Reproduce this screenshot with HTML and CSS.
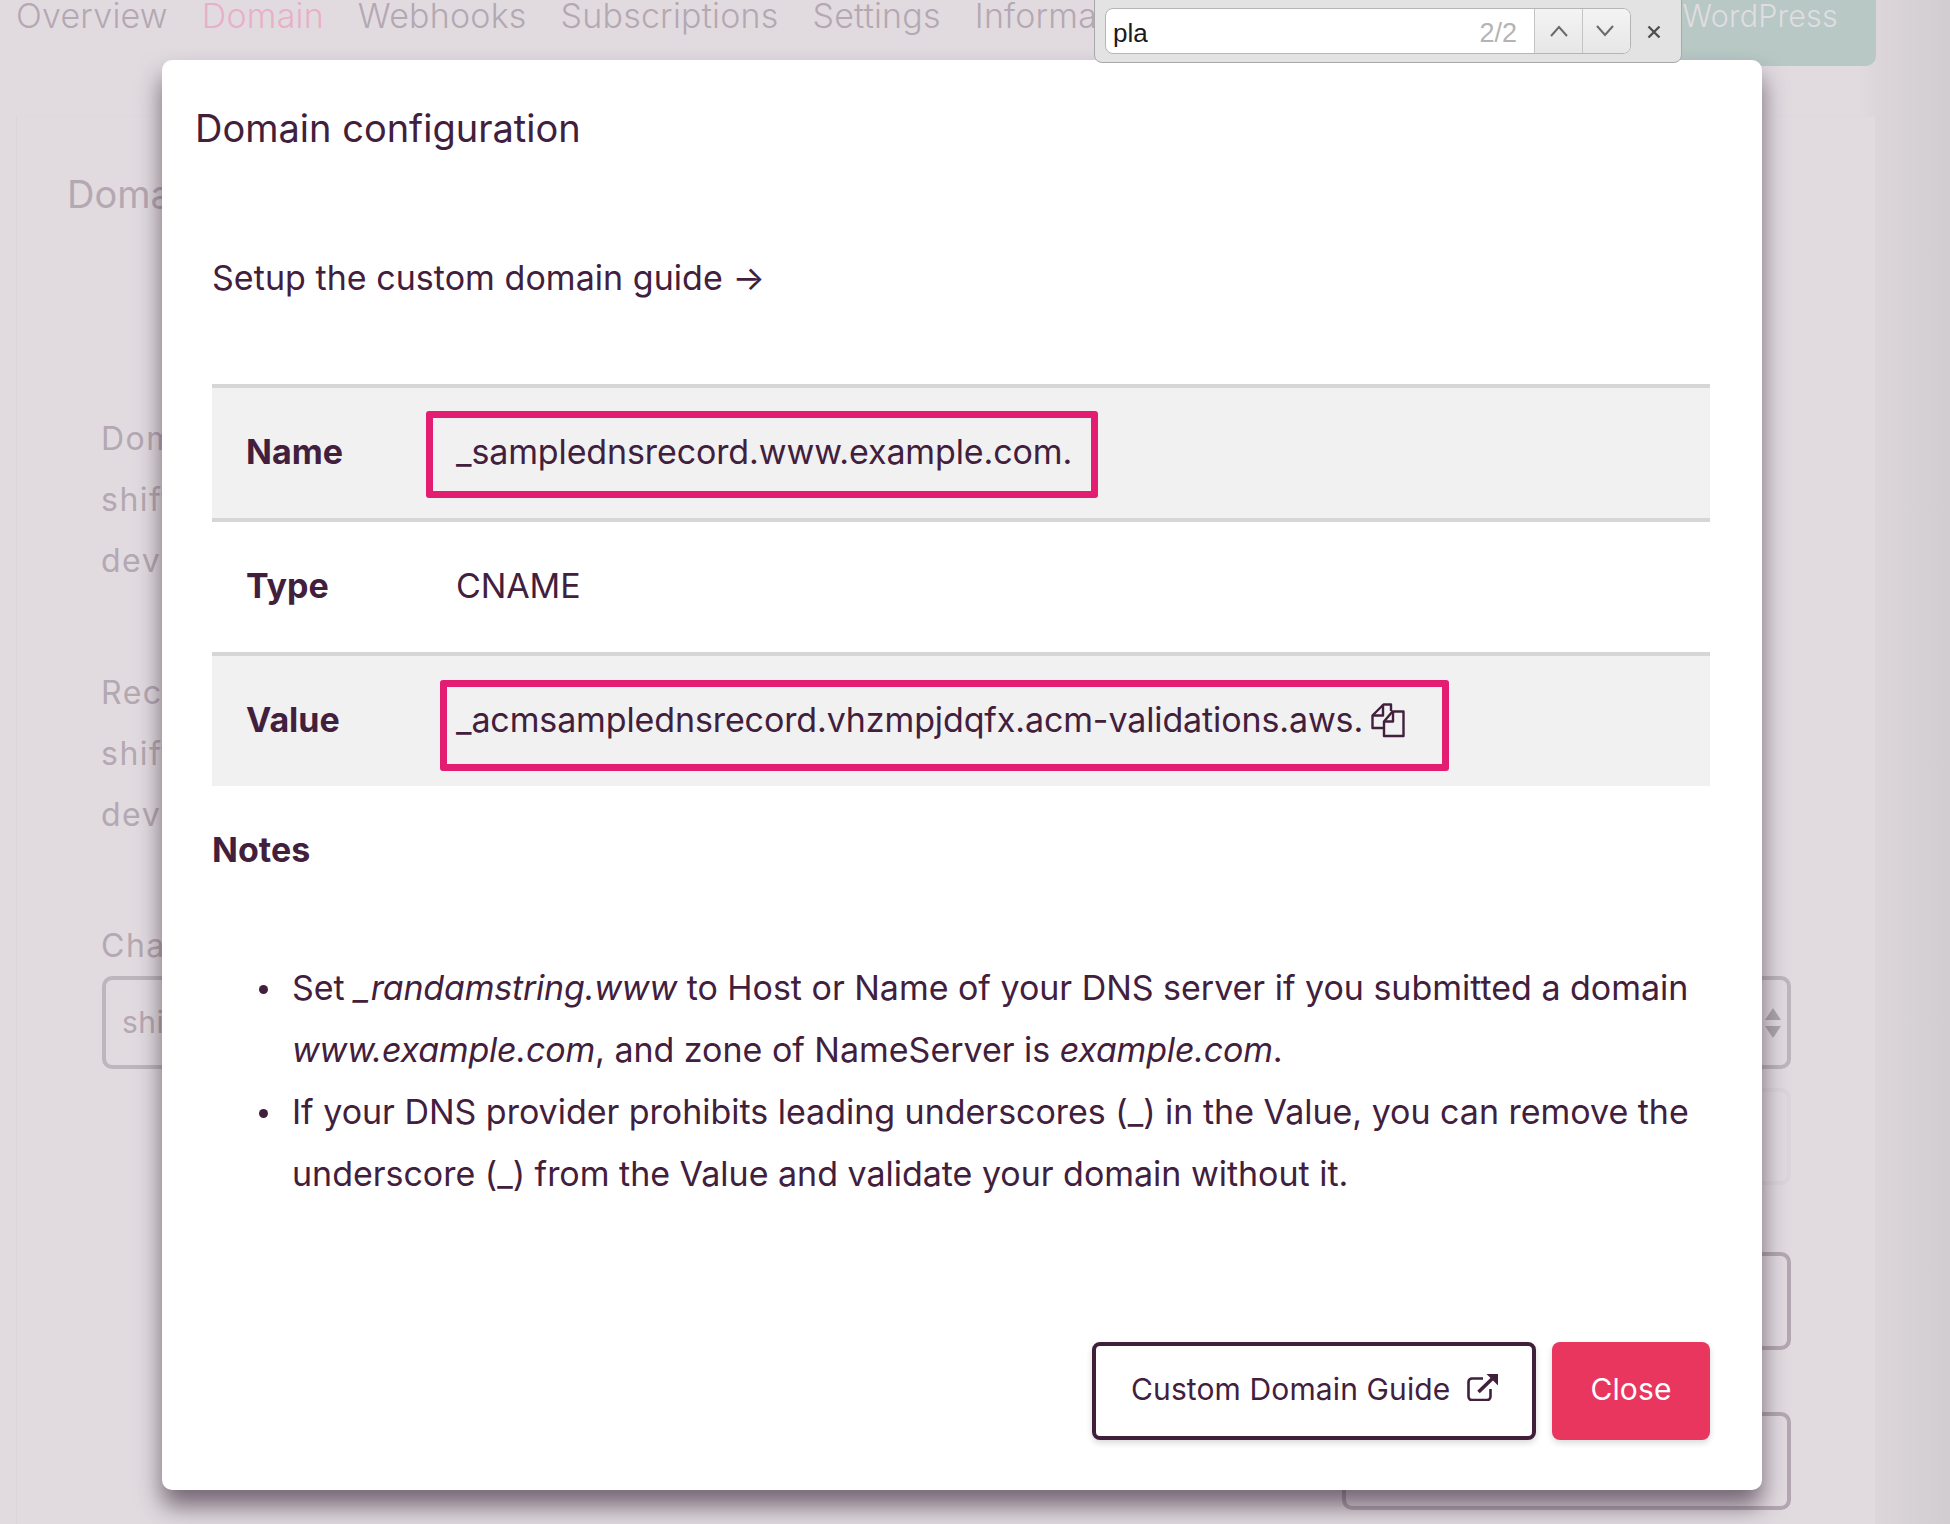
FILE: index.html
```html
<!DOCTYPE html>
<html lang="en">
<head>
<meta charset="utf-8">
<title>Domain configuration</title>
<link rel="stylesheet" href="styles.css">
</head>
<body>
<header class="nav">
  <a class="tab">Overview</a>
  <a class="tab tab-active">Domain</a>
  <a class="tab">Webhooks</a>
  <a class="tab">Subscriptions</a>
  <a class="tab">Settings</a>
  <a class="tab">Information</a>
  <span class="wp-button">WordPress</span>
</header>
<main class="card">
  <h2 class="card-title">Domain</h2>
  <div class="info-block">Domain<br>shiftdemo<br>dev</div>
  <div class="info-block">Record<br>shiftdemo<br>dev</div>
  <div class="field-label">Change</div>
  <div class="select-box">shiftdemo
    <svg class="select-arrows" width="16" height="30" viewBox="0 0 16 30"><path d="M8 0l8 12H0zM0 18h16L8 30z"/></svg>
  </div>
  <div class="faint-box"></div>
  <div class="plain-box plain-box-a"></div>
  <div class="plain-box plain-box-b"></div>
</main>

<section class="modal">
  <h1 class="modal-title">Domain configuration</h1>
  <div class="modal-body">
    <a class="guide-link">Setup the custom domain guide →</a>
    <div class="record-table">
      <div class="record-row record-shaded">
        <span class="record-key">Name</span>
        <span>_samplednsrecord.www.example.com.</span>
        <i class="mark mark-name"></i>
      </div>
      <div class="record-row">
        <span class="record-key">Type</span>
        <span>CNAME</span>
      </div>
      <div class="record-row record-shaded">
        <span class="record-key">Value</span>
        <span>_acmsamplednsrecord.vhzmpjdqfx.acm-validations.aws.</span>
        <svg class="copy-icon" width="34" height="35" viewBox="0 0 34 35" fill="none" stroke="#42203d" stroke-width="2.4" stroke-linejoin="round">
          <path d="M12.5 25H1.5V12.5L12.5 1.5h7.5V8"/>
          <path d="M12 1.5V12.5H1.5"/>
          <path d="M13 18.5L21.5 8.5H32.5V33H13z"/>
          <path d="M22 8.5V18.5H13"/>
        </svg>
        <i class="mark mark-value"></i>
      </div>
    </div>
    <h3 class="notes-title">Notes</h3>
    <ul class="notes">
      <li>Set <em>_randamstring.www</em> to Host or Name of your DNS server if you submitted a domain <em>www.example.com</em>, and zone of NameServer is <em>example.com</em>.</li>
      <li>If your DNS provider prohibits leading underscores (_) in the Value, you can remove the underscore (_) from the Value and validate your domain without it.</li>
    </ul>
  </div>
  <footer class="modal-footer">
    <button class="btn btn-outline"><span class="btn-label">Custom Domain Guide</span>
      <svg class="ext-icon" width="31" height="27" viewBox="0 0 31 27" fill="none" stroke="#42203d" stroke-width="2.6">
        <path d="M16 4.5H5a3.5 3.5 0 0 0-3.500 3.500v14.500a3.500 3.500 0 0 0 3.500 3.500h15a3.500 3.500 0 0 0 3.500-3.500V15"/>
        <path d="M11.500 18L27 3" stroke-width="3.600"/>
        <path d="M19.500 0H31v11.500z" fill="#42203d" stroke="none"/>
      </svg>
    </button>
    <button class="btn btn-primary"><span class="btn-label">Close</span></button>
  </footer>
</section>

<div class="findbar">
  <div class="find-input">
    <span class="find-query">pla</span>
    <span class="find-count">2/2</span>
    <span class="find-btn">
      <svg width="20" height="12" viewBox="0 0 20 12" fill="none" stroke="#6a6a6a" stroke-width="2"><path d="M2 11l8-9 8 9"/></svg>
    </span>
    <span class="find-btn">
      <svg class="find-down" width="20" height="12" viewBox="0 0 20 12" fill="none" stroke="#6a6a6a" stroke-width="2"><path d="M2 1l8 9 8-9"/></svg>
    </span>
  </div>
  <svg class="find-close" width="14" height="14" viewBox="0 0 14 14" fill="none" stroke="#4f4f4f" stroke-width="2.400"><path d="M1.500 1.500l11 11M12.500 1.500l-11 11"/></svg>
</div>
</body>
</html>
```
FILE: styles.css
```css
* { box-sizing: border-box; }

html, body { margin: 0; height: 1524px; overflow: hidden; }

body {
  position: relative;
  font-family: Inter, "Noto Sans", sans-serif;
  font-size: 34px;
  color: #42203d;
  background: linear-gradient(90deg, #e1dbe0 0, #e1dbe0 1860px, #dcd6da 1876px, #d2cdd1 1950px);
}

.nav {
  display: flex;
  align-items: flex-start;
  height: 66px;
  width: 1876px;
  padding-left: 16px;
  margin-bottom: 50px;
  color: #b4a8b2;
  font-weight: 300;
  letter-spacing: 0.2px;
}

.tab { line-height: 31px; margin-right: 34px; }
.tab-active { color: #e8b0c6; }

.wp-button {
  position: absolute;
  left: 1636px;
  top: 0;
  width: 240px;
  height: 66px;
  padding: 0 38px 0 0;
  border-radius: 0 0 10px 10px;
  background: #b7c8c5;
  color: #e0dde0;
  font-size: 30.5px;
  line-height: 32px;
  text-align: right;
}

.card {
  width: 1860px;
  height: 1408px;
  margin-left: 16px;
  padding: 55px 84px 0 84px;
  background: #e1dbe0;
  color: #b4a8b2;
  border-left: 1px solid #dcd6da;
  border-top: 1px solid #dfd9de;
  border-right: 1px solid #dcd6da;
  font-size: 32px;
  letter-spacing: 1.5px;
  font-weight: 400;
}

.card-title {
  margin: 0 0 192px -34px;
  font-size: 38px;
  font-weight: 400;
  line-height: 44px;
  letter-spacing: 0;
}

.info-block { line-height: 61px; margin-bottom: 71px; }
.field-label { line-height: 60px; }

.select-box {
  position: relative;
  height: 93px;
  margin-left: 1px;
  padding: 0 16px;
  border: 4px solid #bdb6bc;
  border-radius: 10px;
  font-size: 30px;
  letter-spacing: 0.5px;
  line-height: 85px;
}

.select-arrows { position: absolute; right: 6px; top: 28px; fill: #ada7ac; }

.faint-box {
  height: 97px;
  margin: 19px 0 0 900px;
  border: 4px solid #dbd6da;
  border-radius: 10px;
}

.plain-box {
  height: 98px;
  border: 4px solid #b3a8b2;
  border-radius: 10px;
}
.plain-box-a { margin-top: 67px; margin-left: 900px; }
.plain-box-b { margin-top: 62px; margin-left: 1241px; }

.modal {
  position: absolute;
  left: 162px;
  top: 60px;
  width: 1600px;
  height: 1430px;
  display: flex;
  flex-direction: column;
  background: #fff;
  border-radius: 10px;
  box-shadow: 0 16px 24px rgba(50, 30, 48, 0.62);
}

.modal-title {
  margin: 41px 0 1px 33px;
  font-size: 38px;
  font-weight: 400;
  line-height: 54px;
}

.modal-body { padding: 92px 52px 0 50px; }

.guide-link { display: block; line-height: 60px; margin-bottom: 76px; letter-spacing: 0.04px; }

.record-row {
  position: relative;
  display: flex;
  align-items: center;
  height: 134px;
  padding: 0 0 3px 34px;
  border-top: 4px solid #d6d6d6;
  letter-spacing: -0.12px;
}
.record-shaded { background: #f1f1f1; }

.record-key { width: 210px; font-weight: 700; letter-spacing: 0; }

.copy-icon { margin-left: 8px; margin-top: 2px; }

.mark {
  position: absolute;
  border: 7px solid #e31d72;
  border-radius: 3px;
}
.mark-name { left: 214px; top: 23px; width: 672px; height: 87px; }
.mark-value { left: 228px; top: 24px; width: 1009px; height: 91px; }

.notes-title {
  margin: 34px 0 77px;
  font-size: 34px;
  font-weight: 700;
  line-height: 60px;
}

.notes {
  margin: 0;
  padding-left: 80px;
  line-height: 62px;
  letter-spacing: -0.02px;
  list-style: none;
}
.notes em { letter-spacing: -0.2px; }
.notes li { position: relative; }
.notes li::before {
  content: "";
  position: absolute;
  left: -33px;
  top: 28px;
  width: 9px;
  height: 9px;
  border-radius: 50%;
  background: #42203d;
}

.modal-footer {
  display: flex;
  justify-content: flex-end;
  gap: 16px;
  margin-top: auto;
  padding: 0 52px 50px;
}

.btn {
  height: 98px;
  border-radius: 8px;
  font: inherit;
  font-size: 30px;
  letter-spacing: 0.12px;
  box-shadow: 0 3px 6px rgba(0, 0, 0, 0.15);
}

.btn-label { position: relative; top: -2px; }

.btn-outline {
  display: flex;
  align-items: center;
  gap: 17px;
  width: 444px;
  padding: 0 0 0 35px;
  border: 4px solid #3f1f3a;
  background: #fff;
  color: #42203d;
}

.btn-primary {
  width: 158px;
  border: 0;
  background: #e9365f;
  color: #fff;
}

.ext-icon { margin-top: -8px; }

.findbar {
  position: absolute;
  left: 1094px;
  top: -2px;
  width: 588px;
  height: 65px;
  display: flex;
  align-items: flex-start;
  padding: 0 0 0 10px;
  background: #e3e3e3;
  border: 1px solid #a8a8a8;
  border-radius: 0 0 8px 8px;
  font-family: "Liberation Sans", Arial, sans-serif;
}

.find-input {
  display: flex;
  align-items: center;
  width: 526px;
  height: 46px;
  margin-top: 9px;
  background: #fff;
  border: 1px solid #b5b5b5;
  border-radius: 8px;
  overflow: hidden;
  font-size: 26px;
}

.find-query { flex: 1; padding: 4px 0 0 7px; color: #1a1a1a; }
.find-count { padding: 4px 17px 0 0; color: #b4b4b4; font-size: 27px; }

.find-btn {
  display: flex;
  align-items: center;
  justify-content: center;
  width: 48px;
  height: 46px;
  border-left: 1px solid #c4c4c4;
  background: linear-gradient(#f4f4f4, #e6e6e6);
}

.find-down { margin-left: -3px; }

.find-close { margin: 26px 0 0 16px; }
```
